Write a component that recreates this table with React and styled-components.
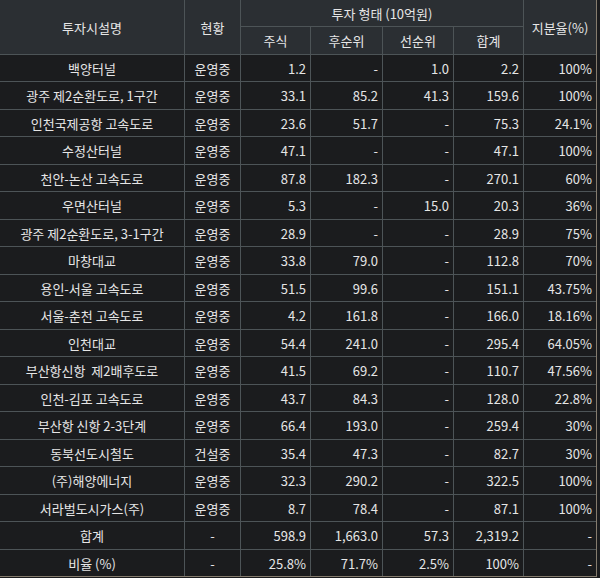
import React from 'react';
import styled, { createGlobalStyle } from 'styled-components';

const GlobalStyle = createGlobalStyle`
  html, body {
    margin: 0;
    padding: 0;
    background: #1b1c1e;
  }
`;

const Grid = styled.div`
  display: grid;
  width: 597px;
  grid-template-columns: 184px 55px 69px 71px 70px 69px 72px;
  grid-template-rows: 26px 27px repeat(9, 26px 27px) 26px;
  gap: 1px;
  background: #4d5457;
  border-right: 1px solid #857c6e;
  border-bottom: 1px solid #857c6e;
  box-sizing: border-box;
  width: 597px;
  font-family: "Noto Sans CJK KR", "Noto Sans", sans-serif;
  font-size: 13px;
  color: #e6e6e6;
`;

const Head = styled.div`
  display: flex;
  align-items: center;
  justify-content: center;
  background: #2b2f33;
  grid-column: ${p => p.col || 'auto'};
  grid-row: ${p => p.row || 'auto'};
  line-height: 1;
`;

const Cell = styled.div`
  display: flex;
  align-items: center;
  justify-content: ${p => (p.num ? 'flex-end' : 'center')};
  padding: 0 ${p => (p.num ? '4px' : '0')} 0 0;
  background: #1b1c1e;
  white-space: pre;
  line-height: 1;
`;

const rows = [
  ['백양터널', '운영중', '1.2', '-', '1.0', '2.2', '100%'],
  ['광주 제2순환도로, 1구간', '운영중', '33.1', '85.2', '41.3', '159.6', '100%'],
  ['인천국제공항 고속도로', '운영중', '23.6', '51.7', '-', '75.3', '24.1%'],
  ['수정산터널', '운영중', '47.1', '-', '-', '47.1', '100%'],
  ['천안-논산 고속도로', '운영중', '87.8', '182.3', '-', '270.1', '60%'],
  ['우면산터널', '운영중', '5.3', '-', '15.0', '20.3', '36%'],
  ['광주 제2순환도로, 3-1구간', '운영중', '28.9', '-', '-', '28.9', '75%'],
  ['마창대교', '운영중', '33.8', '79.0', '-', '112.8', '70%'],
  ['용인-서울 고속도로', '운영중', '51.5', '99.6', '-', '151.1', '43.75%'],
  ['서울-춘천 고속도로', '운영중', '4.2', '161.8', '-', '166.0', '18.16%'],
  ['인천대교', '운영중', '54.4', '241.0', '-', '295.4', '64.05%'],
  ['부산항신항  제2배후도로', '운영중', '41.5', '69.2', '-', '110.7', '47.56%'],
  ['인천-김포 고속도로', '운영중', '43.7', '84.3', '-', '128.0', '22.8%'],
  ['부산항 신항 2-3단계', '운영중', '66.4', '193.0', '-', '259.4', '30%'],
  ['동북선도시철도', '건설중', '35.4', '47.3', '-', '82.7', '30%'],
  ['(주)해양에너지', '운영중', '32.3', '290.2', '-', '322.5', '100%'],
  ['서라벌도시가스(주)', '운영중', '8.7', '78.4', '-', '87.1', '100%'],
  ['합계', '-', '598.9', '1,663.0', '57.3', '2,319.2', '-'],
  ['비율 (%)', '-', '25.8%', '71.7%', '2.5%', '100%', '-'],
];

export default function App() {
  return (
    <>
      <GlobalStyle />
      <Grid>
        <Head col="1" row="1 / span 2">투자시설명</Head>
        <Head col="2" row="1 / span 2">현황</Head>
        <Head col="3 / span 4" row="1">투자 형태 (10억원)</Head>
        <Head col="7" row="1 / span 2">지분율(%)</Head>
        <Head col="3" row="2">주식</Head>
        <Head col="4" row="2">후순위</Head>
        <Head col="5" row="2">선순위</Head>
        <Head col="6" row="2">합계</Head>
        {rows.map((r, i) =>
          r.map((v, j) => (
            <Cell key={`${i}-${j}`} num={j > 1}>
              {v}
            </Cell>
          ))
        )}
      </Grid>
    </>
  );
}
